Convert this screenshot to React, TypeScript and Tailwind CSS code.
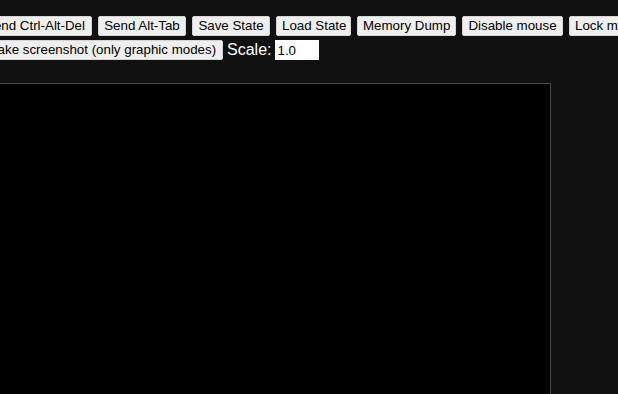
import React from "react";

const btn =
  "shrink-0 h-[20px] px-[5px] bg-[#efefef] border border-[#d4d4d4] rounded-[2px] text-[13.33px] leading-none text-black text-center whitespace-nowrap font-['Liberation_Sans',Arial,sans-serif]";

export default function App() {
  return (
    <div className="w-[618px] h-[394px] overflow-hidden bg-[#111111] font-['Liberation_Sans',Arial,sans-serif]">
      <div className="pt-[16px]">
        <div className="ml-[-22px] flex gap-[6px] whitespace-nowrap">
          <button className={`${btn} w-[114px]`}>Send Ctrl-Alt-Del</button>
          <button className={`${btn} w-[88px]`}>Send Alt-Tab</button>
          <button className={`${btn} w-[78px]`}>Save State</button>
          <button className={`${btn} w-[75px]`}>Load State</button>
          <button className={`${btn} w-[99px]`}>Memory Dump</button>
          <button className={`${btn} w-[101px]`}>Disable mouse</button>
          <button className={btn}>Lock mouse</button>
        </div>
        <div className="ml-[-16px] flex items-center mt-[4px] whitespace-nowrap">
          <button className={`${btn} w-[239px]`}>Take screenshot (only graphic modes)</button>
          <span className="ml-[4px] text-white text-[16px] leading-none">Scale:</span>
          <input
            readOnly
            value="1.0"
            className="ml-[4px] w-[44px] h-[20px] bg-white text-black text-[13.33px] px-[2px] outline-none border-0"
          />
        </div>
      </div>
      <div className="mt-[23px] ml-[-91px] w-[642px] h-[420px] bg-black border border-[#4a4a4a]" />
    </div>
  );
}
